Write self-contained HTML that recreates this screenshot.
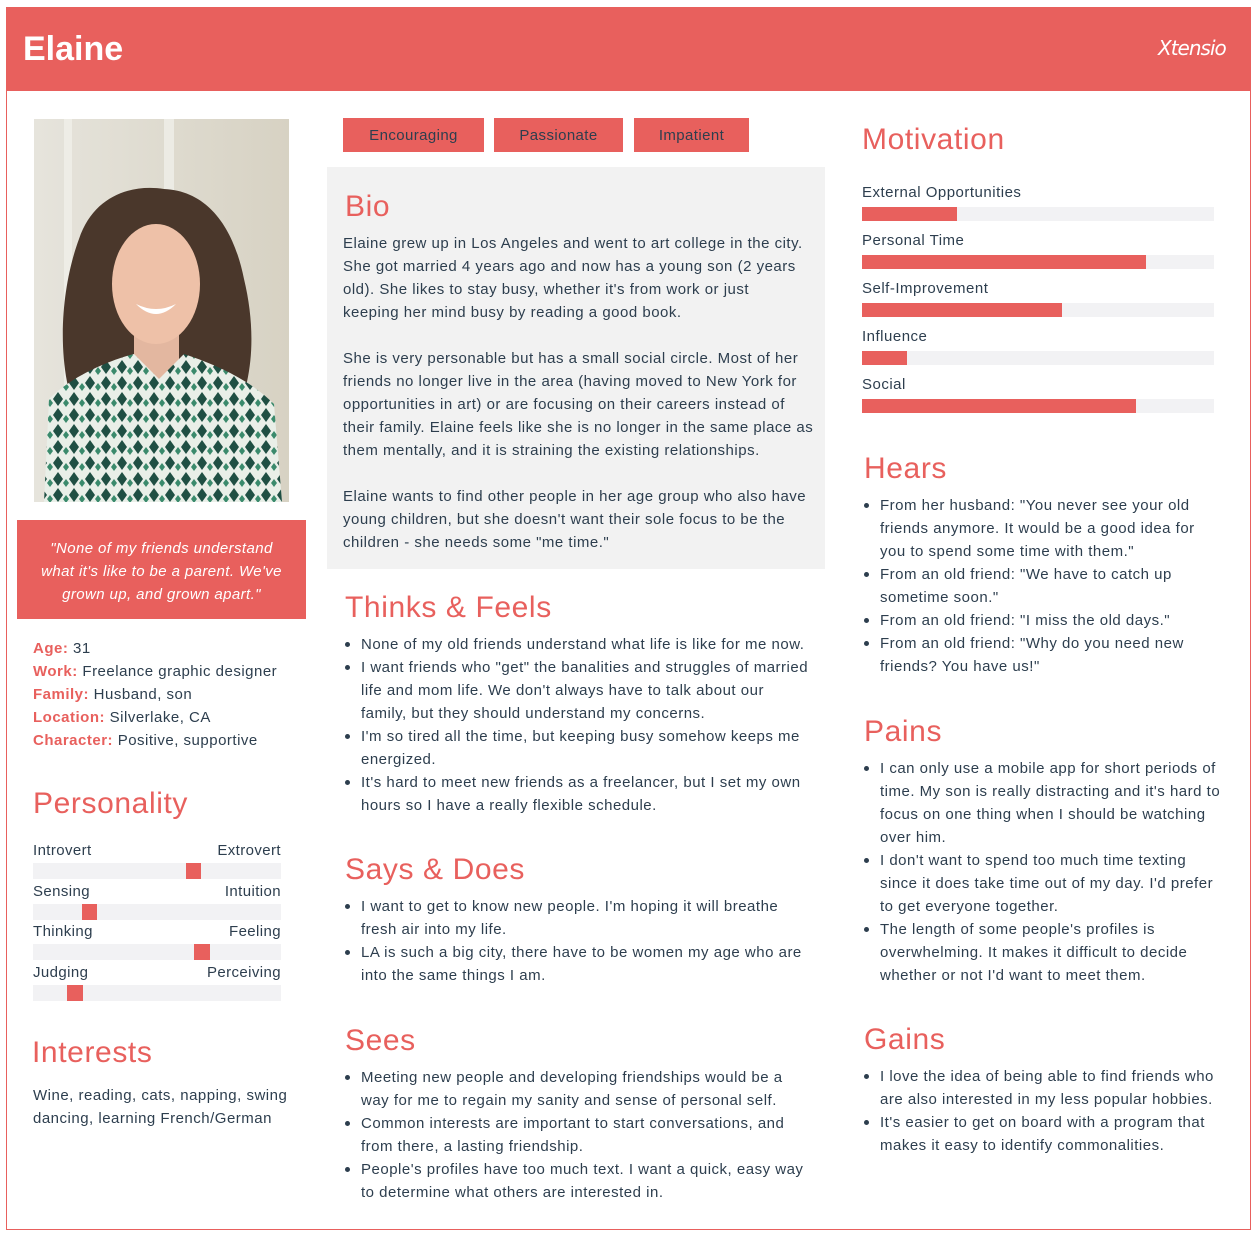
<!DOCTYPE html>
<html><head><meta charset="utf-8"><style>
*{margin:0;padding:0;box-sizing:border-box}
body{width:1259px;height:1238px;background:#fff;position:relative;font-family:"Liberation Sans",sans-serif;color:#2d3e4e;overflow:hidden}
.frame{position:absolute;left:6px;top:7px;width:1245px;height:1223px;border:1px solid #e8605d}
.hdr{position:absolute;left:6px;top:7px;width:1245px;height:84px;background:#e8605d}
.a{position:absolute}
.name{left:23px;top:30px;color:#fff;font-size:34px;font-weight:bold}
.logo{left:1158px;top:36px;color:#fff;font-size:20px;font-style:italic;font-family:"DejaVu Sans",sans-serif;letter-spacing:-1px;font-weight:200}
.t{font-size:15px;letter-spacing:0.5px;line-height:23px;white-space:nowrap;transform:translateY(2px)}
h2{position:absolute;font-weight:normal;color:#e8605d;font-size:30px;letter-spacing:0.6px;white-space:nowrap;transform:translateY(2px)}
.tag{position:absolute;top:118px;height:34px;background:#e8605d;font-size:15px;letter-spacing:0.4px;line-height:36px;text-align:center;color:#2d3e4e}
.bio{left:327px;top:167px;width:498px;height:402px;background:#f2f2f2}
ul{list-style:none;position:absolute;transform:translateY(2px)}
ul li{position:relative;padding-left:16px;font-size:15px;letter-spacing:0.5px;line-height:23px;white-space:nowrap}
ul li:before{content:"";position:absolute;left:0;top:9px;width:5px;height:5px;border-radius:50%;background:#2d3e4e}
.lbl{color:#e8605d;font-weight:bold}
.pbar{position:absolute;left:33px;width:248px;height:16px;background:#f2f2f4}
.pbar i{position:absolute;top:0;width:15px;height:16px;background:#e8605d}
.mbar{position:absolute;left:862px;width:352px;height:14px;background:#f2f2f4}
.mbar i{position:absolute;left:0;top:0;height:14px;background:#e8605d}
.row{position:absolute;left:33px;width:248px;font-size:15px;letter-spacing:0.4px;transform:translateY(2px)}
.row span{position:absolute;right:0;top:0}
</style></head><body>
<div class="frame"></div>
<div class="hdr"></div>
<div class="a name">Elaine</div>
<div class="a logo">Xtensio</div>

<svg class="a" style="left:34px;top:119px" width="255" height="383" viewBox="0 0 255 383">
<defs><pattern id="p" width="16" height="16" patternUnits="userSpaceOnUse"><rect width="16" height="16" fill="#e9efe8"/><path d="M8 1L13 8L8 15L3 8Z" fill="#1f4f43"/><path d="M0 8L3 12L0 16Z M16 8L13 12L16 16Z" fill="#3a8a6c"/></pattern>
<linearGradient id="bg" x1="0" x2="1"><stop offset="0" stop-color="#e6e4dc"/><stop offset="1" stop-color="#d7d2c3"/></linearGradient></defs>
<rect width="255" height="383" fill="url(#bg)"/>
<rect x="30" y="0" width="8" height="383" fill="#eeede6"/>
<rect x="130" y="0" width="10" height="100" fill="#ecebe4"/>
<path d="M40 290 C20 230 30 160 45 120 C60 75 100 65 130 70 C175 72 200 110 210 160 C222 210 220 260 200 300 Z" fill="#4a372b"/>
<rect x="100" y="200" width="45" height="60" fill="#e3b7a0"/>
<ellipse cx="122" cy="165" rx="44" ry="60" fill="#eec1a8"/>
<path d="M102 185 Q122 205 142 185 Q122 195 102 185Z" fill="#fff"/>
<path d="M10 383 L15 280 C40 255 80 240 100 235 L125 260 L150 235 C180 245 215 260 240 285 L248 383 Z" fill="url(#p)"/>
</svg>

<div class="a" style="left:17px;top:520px;width:289px;height:99px;background:#e8605d;color:#fff;font-style:italic;font-size:15px;letter-spacing:0.4px;line-height:23px;text-align:center;padding-top:17px;white-space:nowrap">"None of my friends understand<br>what it's like to be a parent. We've<br>grown up, and grown apart."</div>

<div class="a t" style="left:33px;top:635px"><span class="lbl">Age:</span> 31<br><span class="lbl">Work:</span> Freelance graphic designer<br><span class="lbl">Family:</span> Husband, son<br><span class="lbl">Location:</span> Silverlake, CA<br><span class="lbl">Character:</span> Positive, supportive</div>

<h2 style="left:33px;top:785px">Personality</h2>
<div class="row" style="top:840px">Introvert<span>Extrovert</span></div>
<div class="pbar" style="top:863px"><i style="left:153px"></i></div>
<div class="row" style="top:881px">Sensing<span>Intuition</span></div>
<div class="pbar" style="top:904px"><i style="left:49px"></i></div>
<div class="row" style="top:921px">Thinking<span>Feeling</span></div>
<div class="pbar" style="top:944px"><i style="left:161px;width:16px"></i></div>
<div class="row" style="top:962px">Judging<span>Perceiving</span></div>
<div class="pbar" style="top:985px"><i style="left:34px;width:16px"></i></div>

<h2 style="left:32px;top:1034px">Interests</h2>
<div class="a t" style="left:33px;top:1082px">Wine, reading, cats, napping, swing<br>dancing, learning French/German</div>

<div class="tag" style="left:343px;width:141px">Encouraging</div>
<div class="tag" style="left:494px;width:129px">Passionate</div>
<div class="tag" style="left:634px;width:115px">Impatient</div>

<div class="a bio"></div>
<h2 style="left:345px;top:188px">Bio</h2>
<div class="a t" style="left:343px;top:230px">Elaine grew up in Los Angeles and went to art college in the city.<br>She got married 4 years ago and now has a young son (2 years<br>old). She likes to stay busy, whether it's from work or just<br>keeping her mind busy by reading a good book.<br><br>She is very personable but has a small social circle. Most of her<br>friends no longer live in the area (having moved to New York for<br>opportunities in art) or are focusing on their careers instead of<br>their family. Elaine feels like she is no longer in the same place as<br>them mentally, and it is straining the existing relationships.<br><br>Elaine wants to find other people in her age group who also have<br>young children, but she doesn't want their sole focus to be the<br>children - she needs some "me time."</div>

<h2 style="left:345px;top:589px">Thinks &amp; Feels</h2>
<ul style="left:345px;top:631px">
<li>None of my old friends understand what life is like for me now.</li>
<li>I want friends who "get" the banalities and struggles of married<br>life and mom life. We don't always have to talk about our<br>family, but they should understand my concerns.</li>
<li>I'm so tired all the time, but keeping busy somehow keeps me<br>energized.</li>
<li>It's hard to meet new friends as a freelancer, but I set my own<br>hours so I have a really flexible schedule.</li></ul>

<h2 style="left:345px;top:851px">Says &amp; Does</h2>
<ul style="left:345px;top:893px">
<li>I want to get to know new people. I'm hoping it will breathe<br>fresh air into my life.</li>
<li>LA is such a big city, there have to be women my age who are<br>into the same things I am.</li></ul>

<h2 style="left:345px;top:1022px">Sees</h2>
<ul style="left:345px;top:1064px">
<li>Meeting new people and developing friendships would be a<br>way for me to regain my sanity and sense of personal self.</li>
<li>Common interests are important to start conversations, and<br>from there, a lasting friendship.</li>
<li>People's profiles have too much text. I want a quick, easy way<br>to determine what others are interested in.</li></ul>

<h2 style="left:862px;top:121px">Motivation</h2>
<div class="a t" style="left:862px;top:179px">External Opportunities</div><div class="mbar" style="top:207px"><i style="width:95px"></i></div>
<div class="a t" style="left:862px;top:227px">Personal Time</div><div class="mbar" style="top:255px"><i style="width:284px"></i></div>
<div class="a t" style="left:862px;top:275px">Self-Improvement</div><div class="mbar" style="top:303px"><i style="width:200px"></i></div>
<div class="a t" style="left:862px;top:323px">Influence</div><div class="mbar" style="top:351px"><i style="width:45px"></i></div>
<div class="a t" style="left:862px;top:371px">Social</div><div class="mbar" style="top:399px"><i style="width:274px"></i></div>

<h2 style="left:864px;top:450px">Hears</h2>
<ul style="left:864px;top:492px">
<li>From her husband: "You never see your old<br>friends anymore. It would be a good idea for<br>you to spend some time with them."</li>
<li>From an old friend: "We have to catch up<br>sometime soon."</li>
<li>From an old friend: "I miss the old days."</li>
<li>From an old friend: "Why do you need new<br>friends? You have us!"</li></ul>

<h2 style="left:864px;top:713px">Pains</h2>
<ul style="left:864px;top:755px">
<li>I can only use a mobile app for short periods of<br>time. My son is really distracting and it's hard to<br>focus on one thing when I should be watching<br>over him.</li>
<li>I don't want to spend too much time texting<br>since it does take time out of my day. I'd prefer<br>to get everyone together.</li>
<li>The length of some people's profiles is<br>overwhelming. It makes it difficult to decide<br>whether or not I'd want to meet them.</li></ul>

<h2 style="left:864px;top:1021px">Gains</h2>
<ul style="left:864px;top:1063px">
<li>I love the idea of being able to find friends who<br>are also interested in my less popular hobbies.</li>
<li>It's easier to get on board with a program that<br>makes it easy to identify commonalities.</li></ul>
</body></html>
